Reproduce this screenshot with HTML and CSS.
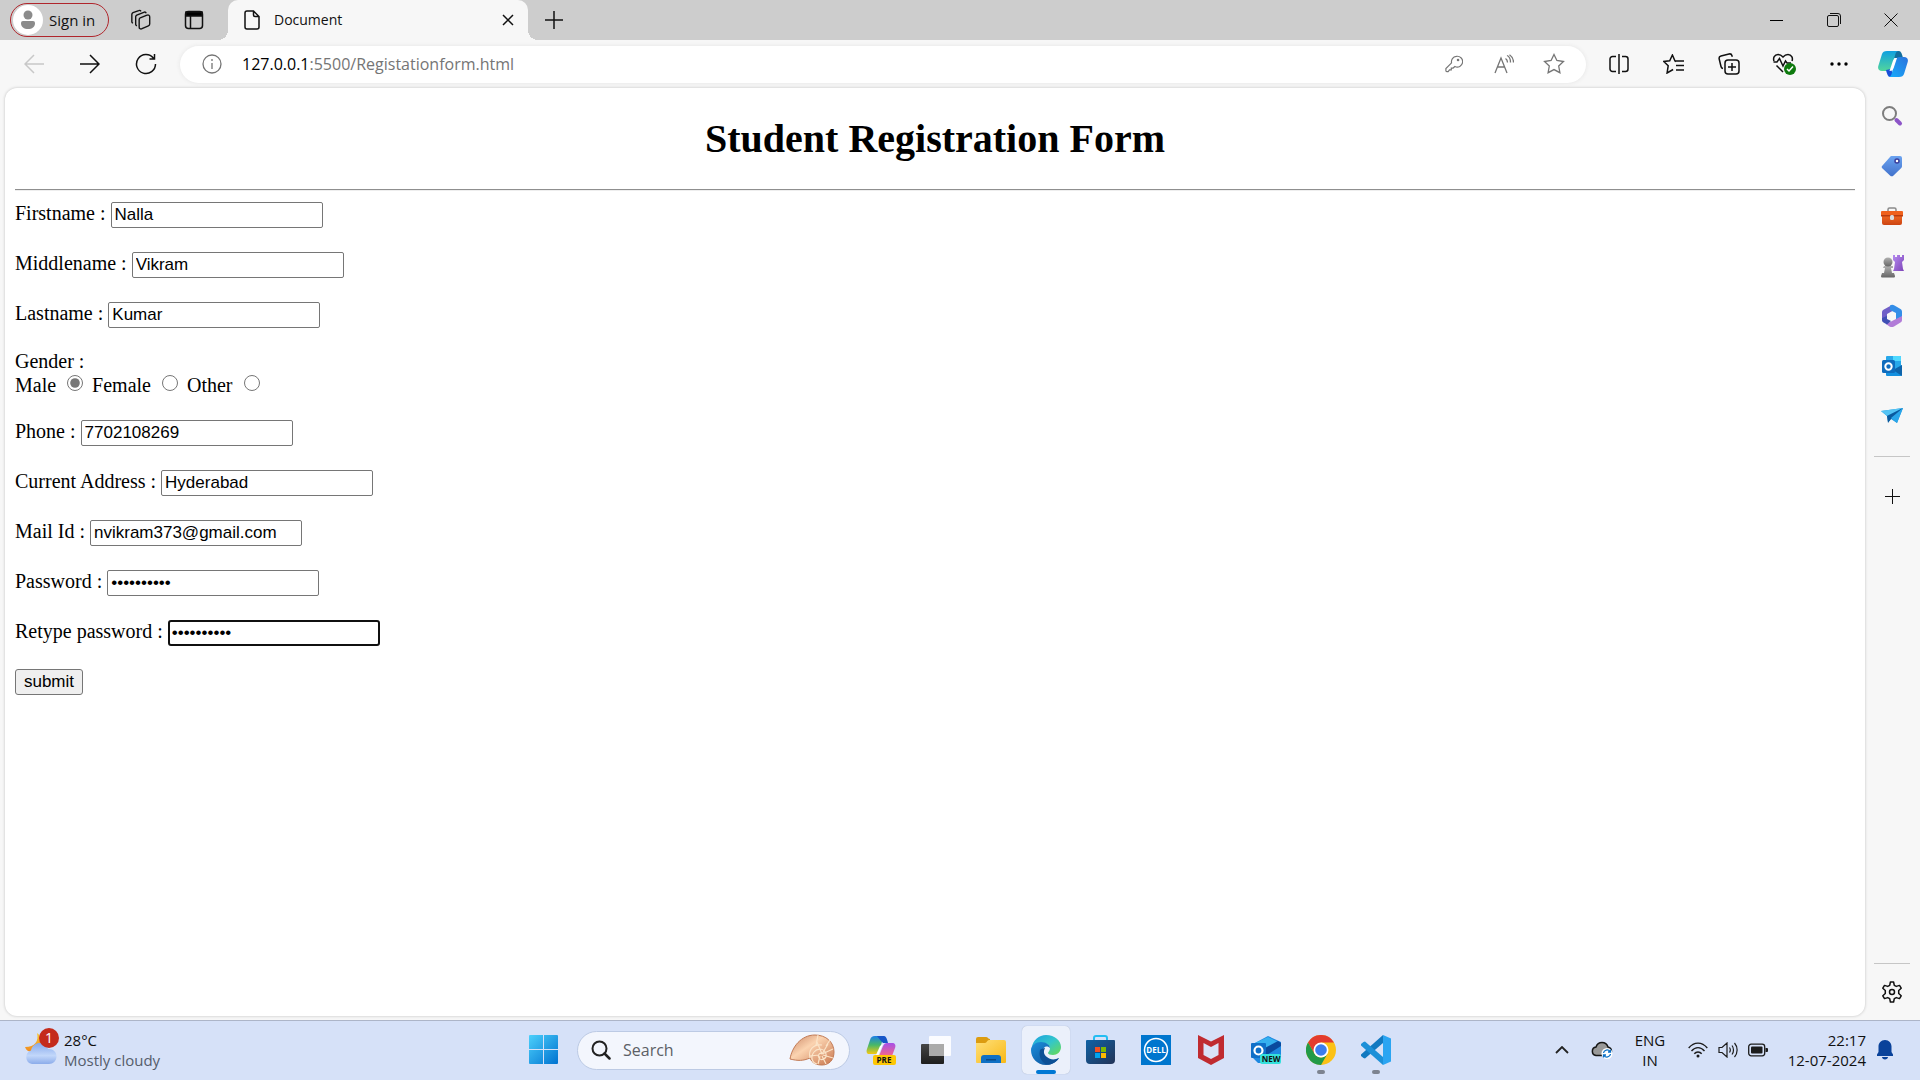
FILE: index.html
```html
<!DOCTYPE html>
<html lang="en">
<head>
<meta charset="utf-8">
<meta name="viewport" content="width=device-width, initial-scale=1">
<title>Document</title>
<link rel="stylesheet" href="styles.css">
</head>
<body>
<svg class="defs" aria-hidden="true">
  <defs>
    <linearGradient id="sky" x1="0" y1="0" x2="1" y2="1"><stop offset="0" stop-color="#4cd0fb"/><stop offset="1" stop-color="#0072d0"/></linearGradient>
    <linearGradient id="aqua" x1="0" y1="0" x2="0" y2="1"><stop offset="0" stop-color="#10a0e0"/><stop offset="1" stop-color="#52d69c"/></linearGradient>
    <linearGradient id="azure" x1="1" y1="0" x2="0" y2="1"><stop offset="0" stop-color="#2b72dc"/><stop offset="1" stop-color="#17aefc"/></linearGradient>
    <linearGradient id="rainbow" x1="0" y1="0" x2="0" y2="1"><stop offset="0" stop-color="#1b7fe8"/><stop offset=".5" stop-color="#48b868"/><stop offset="1" stop-color="#f6c912"/></linearGradient>
    <linearGradient id="pink" x1="0" y1="0" x2="0" y2="1"><stop offset="0" stop-color="#a650e8"/><stop offset="1" stop-color="#f5678b"/></linearGradient>
    <linearGradient id="violet" x1="0" y1="0" x2="1" y2="1"><stop offset="0" stop-color="#b58bf0"/><stop offset="1" stop-color="#7e45b8"/></linearGradient>
    <linearGradient id="gray" x1="0" y1="0" x2="0" y2="1"><stop offset="0" stop-color="#b0b0b0"/><stop offset="1" stop-color="#666"/></linearGradient>
    <linearGradient id="tagfill" x1="0" y1="0" x2="0" y2="1"><stop offset="0" stop-color="#6ba3f0"/><stop offset="1" stop-color="#4272cc"/></linearGradient>
    <linearGradient id="orange" x1="0" y1="0" x2="0" y2="1"><stop offset="0" stop-color="#f26a22"/><stop offset="1" stop-color="#cc4412"/></linearGradient>
    <linearGradient id="yellow" x1="0" y1="0" x2="1" y2="1"><stop offset="0" stop-color="#ffe07a"/><stop offset="1" stop-color="#f8b816"/></linearGradient>
    <linearGradient id="edgetop" x1="0" y1="0" x2="1" y2="1"><stop offset="0" stop-color="#1a9fe0"/><stop offset=".5" stop-color="#33c6cb"/><stop offset="1" stop-color="#6bdc4f"/></linearGradient>
    <linearGradient id="edgelow" x1="0" y1="0" x2="1" y2="1"><stop offset="0" stop-color="#1b8fdc"/><stop offset="1" stop-color="#0d4a92"/></linearGradient>
    <linearGradient id="navy" x1="0" y1="0" x2="1" y2="1"><stop offset="0" stop-color="#0f62a6"/><stop offset="1" stop-color="#233357"/></linearGradient>
    <linearGradient id="cloudfill" x1="0" y1="0" x2="0" y2="1"><stop offset="0" stop-color="#86a9ec"/><stop offset=".6" stop-color="#c2d7fa"/><stop offset="1" stop-color="#8cacea"/></linearGradient>
    <linearGradient id="moon" x1="0" y1="0" x2="0" y2="1"><stop offset="0" stop-color="#f9c832"/><stop offset="1" stop-color="#f08a20"/></linearGradient>
    <linearGradient id="shell" x1="0" y1="0" x2="1" y2="1"><stop offset="0" stop-color="#c98463"/><stop offset=".4" stop-color="#fbd3b0"/><stop offset="1" stop-color="#c8754c"/></linearGradient>
    <linearGradient id="dark" x1="0" y1="0" x2="0" y2="1"><stop offset="0" stop-color="#454545"/><stop offset="1" stop-color="#1e1e1e"/></linearGradient>
  </defs>
</svg>

<header class="tabstrip">
  <button class="profile"><span class="avatar"><svg width="16" height="20" viewBox="0 0 16 20" fill="#8b8b8b"><circle cx="8" cy="5" r="4.500"/><path d="M3 11h10a2 2 0 0 1 2 2c0 4-3 6-7 6s-7-2-7-6a2 2 0 0 1 2-2z"/></svg></span>Sign in</button>
  <button class="strip-btn" aria-label="Workspaces"><svg class="line" width="22" height="22" viewBox="0 0 24 24"><path d="M10.500 10l8-3.200a2 2 0 0 1 3 2v7.500c0 1-.5 1.700-1.400 2l-7 3.200a2 2 0 0 1-3.100-1.900v-7.600c0-1 .1-1.600.5-2M7.500 18.500C6.600 18 6.200 17.600 6.200 17V8.500c0-1 .5-1.500 1.200-1.900L15 3.600c1-.4 2.300 0 2.700 1M3.200 15.500c-.8-.4-1.200-1-1.200-1.700V6c0-1 .5-1.600 1.300-2L9.500 1.700c1-.4 2 0 2.500.8"/></svg></button>
  <button class="strip-btn" aria-label="Tab actions"><svg class="line" width="20" height="20" viewBox="0 0 20 20"><rect x="1.500" y="1.500" width="17" height="17" rx="3"/><path d="M6.500 6v12"/><path d="M2 2h16v4H2z" fill="#000"/></svg></button>
  <div class="tab">
    <svg class="line" width="16" height="20" viewBox="0 0 16 20"><path d="M3 1h6.500L15 6.500V17a2 2 0 0 1-2 2H3a2 2 0 0 1-2-2V3a2 2 0 0 1 2-2zM9.500 1v4a1.500 1.500 0 0 0 1.500 1.500h4"/></svg>
    <span class="tab-title">Document</span>
    <button class="tab-close" aria-label="Close tab"><svg class="line" width="12" height="12" viewBox="0 0 12 12"><path d="M1 1l10 10M11 1L1 11"/></svg></button>
  </div>
  <button class="new-tab" aria-label="New tab"><svg class="line" width="18" height="18" viewBox="0 0 18 18"><path d="M9 0v18M0 9h18"/></svg></button>
  <div class="window-controls">
    <button aria-label="Minimize"><svg width="13" height="13" viewBox="0 0 13 13"><path d="M0 6h13v1H0z"/></svg></button>
    <button aria-label="Restore"><svg class="line thin" width="14" height="14" viewBox="0 0 14 14"><rect x=".5" y="2.500" width="11" height="11" rx="1.500"/><path d="M3 .5h8a2.500 2.500 0 0 1 2.500 2.500v8"/></svg></button>
    <button aria-label="Close"><svg class="line thin" width="14" height="14" viewBox="0 0 14 14"><path d="M.5.5l13 13M13.500.5l-13 13"/></svg></button>
  </div>
</header>

<nav class="toolbar" aria-label="Browser">
  <div class="nav-buttons">
    <button aria-label="Back" disabled><svg class="line faint" width="20" height="20" viewBox="0 0 20 20"><path d="M20 10H1M10 1l-9 9 9 9"/></svg></button>
    <button aria-label="Forward"><svg class="line" width="20" height="20" viewBox="0 0 20 20"><path d="M0 10h19M10 1l9 9-9 9"/></svg></button>
    <button aria-label="Refresh"><svg class="line" width="22" height="22" viewBox="0 0 22 22"><path d="M20.500 11A9.500 9.500 0 1 1 18.500 5.200M19.500 1v5h-5"/></svg></button>
  </div>
  <div class="address">
    <svg class="line gray" width="20" height="20" viewBox="0 0 20 20"><circle cx="10" cy="10" r="9"/><path d="M10 9v6M10 5v2"/></svg>
    <div class="url" role="textbox" aria-label="Address"><span class="host">127.0.0.1</span>:5500/Registationform.html</div>
    <button aria-label="Passwords"><svg class="line gray" width="18" height="18" viewBox="0 0 20 20"><path d="M12.500 1.500a6 6 0 1 1-1.500 11.300L9 14.500H7v2H5l-1.500 2H2a1 1 0 0 1-1-1V15l6.300-6.200A6 6 0 0 1 12.500 1.500z"/><circle cx="14.500" cy="5.500" r=".8"/></svg></button>
    <button aria-label="Read aloud"><svg class="line gray" width="20" height="20" viewBox="0 0 20 20"><path d="M1 19L7 4l6 15M3.500 13h7M11.500 4.500c1.300.8 2 2 2 4M13 1.500c2.500 1 3.500 3.500 3.500 7M15.500.8c2.500 1.700 4 4.500 4 7.700"/></svg></button>
    <button aria-label="Favorite this page"><svg class="line gray" width="22" height="22" viewBox="0 0 22 22"><path d="M11 1.500l2.900 6 6.600 1-4.800 4.600 1.200 6.600-5.900-3.100-5.900 3.100 1.200-6.600L1.500 8.500l6.600-1z"/></svg></button>
  </div>
  <div class="tools">
    <button aria-label="Split screen"><svg class="line" width="20" height="20" viewBox="0 0 20 20"><path d="M7 2.500H3.500a2.500 2.500 0 0 0-2.500 2.500v10a2.500 2.500 0 0 0 2.500 2.500H7M10 0v20M13 2.500h3.500A2.500 2.500 0 0 1 19 5v10a2.500 2.500 0 0 1-2.500 2.500H13"/></svg></button>
    <button aria-label="Favorites"><svg class="line" width="22" height="20" viewBox="0 0 22 20"><path d="M13 7.500l-1-.5-2.600-6L6.700 6.700.8 7.500l4.400 4.200L4.100 19l6-3.500M13 7h8M13 11.500h8M13 16h8M12 7h2"/></svg></button>
    <button aria-label="Collections"><svg class="line" width="22" height="22" viewBox="0 0 22 22"><rect x="7" y="7" width="14" height="14" rx="3"/><path d="M14 10v8M10 14h8M5 15.500C3.800 15.300 3.200 14.600 3 13.500L1.200 6A2.500 2.500 0 0 1 3 3l8-2a2.500 2.500 0 0 1 3 1.700l.3 1"/></svg></button>
    <button aria-label="Browser essentials"><svg class="line" width="24" height="22" viewBox="0 0 24 22"><path d="M2 8C.8 5 2.500 1.500 6 1.500c2.200 0 3.500.8 5 2.500 1.500-1.700 2.800-2.500 5-2.500 3.500 0 5.200 3.500 4 6.500M1.500 9H5l2.500-3.500L11 13l2.500-5L15 10h4M4.500 12.500l6.500 6.500"/><circle cx="18" cy="16" r="6" fill="#0e7a0e" stroke="none"/><path d="M15 16l2 2 4-4.500" stroke="#fff"/></svg></button>
    <button aria-label="Settings and more"><svg width="18" height="4" viewBox="0 0 18 4"><circle cx="2" cy="2" r="1.700"/><circle cx="9" cy="2" r="1.700"/><circle cx="16" cy="2" r="1.700"/></svg></button>
  </div>
  <button class="copilot" aria-label="Copilot"><svg width="30" height="28" viewBox="0 0 30 28"><path d="M16 1h5c2 0 3 3 4 7h-9z" fill="#126e9e"/><path d="M9 1h12c-2 0-3 1-3.600 3L14 17c-1 3-2 4-5 4H4c-3 0-4.500-2-3.700-5L4 4c.8-2 2-3 5-3z" fill="url(#aqua)"/><path d="M8 20l5-1 3 8h-4c-2 0-3-3-4-7z" fill="#1850d8"/><path d="M21 27H10c2 0 3-1 3.600-3L17 11c1-3 2-4 5-4h4c3 0 4.500 2 3.700 5L26 24c-.8 2-2 3-5 3z" fill="url(#azure)"/><path d="M18 8h1l-3 9c-.7 2.500-1.500 3.500-4 4h-.5l3-9c.7-2.500 1.500-3.500 3.500-4z" fill="#fff"/></svg></button>
</nav>

<div class="workspace">
  <main class="page">
    <h1>Student Registration Form</h1>
    <hr>
    <form class="form">
      <div class="field"><label for="first">Firstname :</label><input id="first" type="text" value="Nalla"></div>
      <div class="field"><label for="middle">Middlename :</label><input id="middle" type="text" value="Vikram"></div>
      <div class="field"><label for="last">Lastname :</label><input id="last" type="text" value="Kumar"></div>
      <div class="gender" role="radiogroup" aria-labelledby="gender">
        <div id="gender">Gender :</div>
        <div class="options">
          <label for="male">Male</label><input id="male" type="radio" name="gender" checked>
          <label for="female">Female</label><input id="female" type="radio" name="gender">
          <label for="other">Other</label><input id="other" type="radio" name="gender">
        </div>
      </div>
      <div class="field"><label for="phone">Phone :</label><input id="phone" type="tel" value="7702108269"></div>
      <div class="field"><label for="addr">Current Address :</label><input id="addr" type="text" value="Hyderabad"></div>
      <div class="field"><label for="mail">Mail Id :</label><input id="mail" type="email" value="nvikram373@gmail.com"></div>
      <div class="field"><label for="pw">Password :</label><input id="pw" type="password" value="abcdefghij"></div>
      <div class="field"><label for="pw2">Retype password :</label><input id="pw2" class="active" type="password" value="abcdefghij"></div>
      <button class="submit" type="button">submit</button>
    </form>
  </main>
  <aside class="sidebar">
    <button aria-label="Search"><svg width="22" height="22" viewBox="0 0 22 22" fill="none"><circle cx="8.500" cy="8.500" r="6.500" stroke="#7d7d7d" stroke-width="2"/><path d="M15.500 15l3.500 3.500" stroke="#8d55c8" stroke-width="4" stroke-linecap="round"/></svg></button>
    <button aria-label="Shopping"><svg width="22" height="22" viewBox="0 0 22 22"><path d="M11 1h8a2 2 0 0 1 2 2v8c0 1-.3 1.500-1 2.200l-7.500 7.300a2.500 2.500 0 0 1-3.500 0l-7.500-7a2 2 0 0 1 0-3L9 2c.6-.7 1-1 2-1z" fill="url(#tagfill)"/><circle cx="16" cy="6" r="2" fill="#fff" stroke="#3a3f9c" stroke-width="1.500"/></svg></button>
    <button aria-label="Tools"><svg width="22" height="18" viewBox="0 0 22 18"><path d="M7 5V2.500A1.500 1.500 0 0 1 8.500 1h5A1.500 1.500 0 0 1 15 2.500V5" fill="none" stroke="#8a8a8a" stroke-width="1.500"/><path d="M1 8h20v8a2 2 0 0 1-2 2H3a2 2 0 0 1-2-2z" fill="url(#orange)"/><path d="M1 4h20a1 1 0 0 1 1 1v4H0V5a1 1 0 0 1 1-1z" fill="#f0611c"/><path d="M0 8h22v1.500H0z" fill="#b83c10"/><rect x="9" y="8" width="4" height="5" rx="1.500" fill="#d8dde0"/></svg></button>
    <button aria-label="Games"><svg width="24" height="24" viewBox="0 0 24 24"><path d="M13 1h2v2h2V1h3v2h2V1h2v5l-2 2 1 7 1 2H13l1-2 1-7-2-2z" fill="url(#violet)"/><g fill="url(#gray)"><path d="M4 12h9v2h-2l1 5h2l1 3c0 1-.5 1.500-1.500 1.500h-11c-1 0-1.500-.5-1.500-1.500l1-3h2l1-5H3z"/><circle cx="8" cy="8" r="4.500"/></g></svg></button>
    <button aria-label="Microsoft 365"><svg width="22" height="24" viewBox="0 0 22 24"><path d="M11 1L2 6a3 3 0 0 0-1 2v8l5 1V10l9-5z" fill="#6f5fc8"/><path d="M9 1.500c1.500-1 3-1 4.500 0l6 3.500c1 .7 1.500 1.500 1.500 3v8l-6-1V9l-6-3z" fill="#348ee8"/><path d="M21 12v4c0 1-.5 2-1.500 2.500L13 22.500c-1.500.8-3 .8-4.500 0L5 20l10-5z" fill="#b27cd8"/><path d="M1 14l5-2v3l4 2-4 3.500L2.500 18.500C1.500 18 1 17 1 16z" fill="#404fb4"/><circle cx="11" cy="12" r="3.600" fill="#f7f7f7"/></svg></button>
    <button aria-label="Outlook"><svg width="22" height="22" viewBox="0 0 22 22"><rect x="5" y="1" width="15" height="16" rx="1" fill="#28a8ea"/><path d="M12 1h7a1 1 0 0 1 1 1v4h-8z" fill="#50d9ff"/><path d="M5 11l8 4 8-5v10a1 1 0 0 1-1 1H6a1 1 0 0 1-1-1z" fill="#1490df"/><path d="M21 10v11l-9-6z" fill="#0f64aa"/><rect x="1" y="5" width="13" height="13" rx="1.500" fill="#0f6cbd"/><circle cx="7.500" cy="11.500" r="3.200" fill="none" stroke="#fff" stroke-width="2"/></svg></button>
    <button aria-label="Drop"><svg width="22" height="18" viewBox="0 0 22 18"><path d="M0 4l22-3-6 15-6-4-3 3-1-6z" fill="#1f96dc"/><path d="M0 4l22-3L6 9z" fill="#55c4f4"/><path d="M22 1L6 9l1 7 3-4z" fill="#0b5a9e"/><path d="M22 1L10 11l6 5z" fill="#2aa6ea"/></svg></button>
    <span class="divider"></span>
    <button aria-label="Customize"><svg class="line thin" width="15" height="15" viewBox="0 0 15 15"><path d="M7.500 0v15M0 7.500h15"/></svg></button>
    <span class="spacer"></span>
    <span class="divider low"></span>
    <button aria-label="Settings"><svg class="line" width="24" height="24" viewBox="0 0 24 24"><path d="M10.400 2h3.200l.7 3.300 2 1.100 3.200-1 1.700 2.800-2.500 2.300v3l2.500 2.300-1.700 2.800-3.200-1-2 1.100-.7 3.300h-3.200l-.7-3.300-2-1.100-3.200 1-1.700-2.800 2.500-2.300v-3L2.800 8.200l1.700-2.800 3.200 1 2-1.100z" stroke-linejoin="round"/><circle cx="12" cy="12" r="2.500"/></svg></button>
  </aside>
</div>

<footer class="taskbar">
  <button class="weather">
    <span class="weather-icon"><svg width="32" height="36" viewBox="0 0 32 36"><path d="M12 1c2 8-2 14-12 14 2 6 9 6 14 2s4-12-2-16z" fill="url(#moon)"/><path d="M7 32a7 7 0 0 1-1-13.500c1-5 5-7.500 9-7.500 4 0 7 2 8 6 5-.5 8.500 3 8.500 7.500S28 32 24 32z" fill="url(#cloudfill)"/></svg><span class="badge">1</span></span>
    <span class="weather-text"><span>28°C</span><span class="muted">Mostly cloudy</span></span>
  </button>
  <div class="apps">
    <button class="app" aria-label="Start"><svg width="30" height="30" viewBox="0 0 30 30" fill="url(#sky)"><path d="M1 0h13v14H0V1a1 1 0 0 1 1-1zM15 0h13a1 1 0 0 1 1 1v13H15zM0 15h14v14H1a1 1 0 0 1-1-1zM15 15h14v13a1 1 0 0 1-1 1H15z"/></svg></button>
    <div class="search">
      <svg width="20" height="20" viewBox="0 0 20 20" fill="none" stroke="#222" stroke-width="2"><circle cx="8.500" cy="8.500" r="7"/><path d="M13.500 13.500l5 5" stroke-linecap="round" stroke-width="2.500"/></svg>
      <input type="search" aria-label="Search" placeholder="Search">
      <svg width="46" height="32" viewBox="0 0 46 32"><path d="M1 25C3 13 12 1 26 1c11 0 19 7 19 17 0 8-5 13-12 13-6 0-10-2-12-7-7 3-12 3-20 1z" fill="url(#shell)" stroke="#c17a55"/><path d="M21 24c-2-8 3-14 12-13M33 20c-2-2-5 1-3 4s8 1 7-4-8-7-12-2-2 11 3 12M33 20L28 8M33 20l6-10M33 20l11-5M34 21l10 3M33 22l4 8M31 22l-2 8M30 21l-9 1M27 11l2-10M37 12l4-6" fill="none" stroke="#fbe4c8" stroke-width="1.200"/></svg>
    </div>
    <button class="app" aria-label="Copilot preview"><svg width="30" height="30" viewBox="0 0 30 30"><path d="M9 1h8c2 0 3 2 4 6h-5l-4 12H3c-2 0-3-2-2-5L4 5c1-3 2-4 5-4z" fill="url(#rainbow)"/><path d="M11 1h7c2 0 3 3 4 7h-5l-2-2z" fill="#1756c8"/><path d="M21 8h5c3 0 4 2 3 5l-3 8H13l4-10c1-2 2-3 4-3z" fill="url(#pink)"/><path d="M17 9l-5 12-2-1 4-9z" fill="#fff"/><rect x="7" y="20" width="23" height="10" rx="2" fill="#fdc705"/><text class="tag-text" x="18" y="28" text-anchor="middle">PRE</text></svg></button>
    <button class="app" aria-label="Task view"><svg width="30" height="30" viewBox="0 0 30 30"><rect x="0" y="9" width="23" height="20" rx="1" fill="url(#dark)"/><rect x="8" y="1" width="22" height="20" rx="1" fill="#fff" fill-opacity=".9"/><path d="M8 9h15v12H8z" fill="#aaa"/></svg></button>
    <button class="app" aria-label="File Explorer"><svg width="30" height="30" viewBox="0 0 30 30"><path d="M2 2h8c2 0 2 2 4 2v5H0V4a2 2 0 0 1 2-2z" fill="#dc9c10"/><path d="M13 5h15a2 2 0 0 1 2 2v20a1 1 0 0 1-1 1H1a1 1 0 0 1-1-1V8h9c2 0 2-3 4-3z" fill="url(#yellow)"/><path d="M5 28v-5a3 3 0 0 1 3-3h14a3 3 0 0 1 3 3v5z" fill="#0f70c4"/><rect x="10" y="24" width="10" height="1.500" fill="#0a4a88"/></svg></button>
    <button class="app current" aria-label="Microsoft Edge"><svg width="30" height="30" viewBox="0 0 30 30"><path d="M1 12C2 5 8 0 15 0c9 0 15 6 15 12 0 5-4 8-8 8-3 0-5-1-5-2s2-2 2-5c0-3-4-5-8-5-5 0-9 2-10 4z" fill="url(#edgetop)"/><path d="M0 15c0-5 5-8 10-8 5 0 9 3 9 6-1-1-3-2-5-1-4 2-4 8 0 11 4 4 10 3 14 0-3 4-7 7-13 7C6 30 0 23 0 15z" fill="url(#edgelow)"/><path d="M9 15c-2 8 3 14 8 14.800 5-.5 9-3.300 11-6.800-4 2-9 2-12-1-3-2-4-5-2-9-2 0-4 1-5 2z" fill="#0c5096"/></svg></button>
    <button class="app" aria-label="Microsoft Store"><svg width="30" height="30" viewBox="0 0 30 30"><path d="M8 6V3a2 2 0 0 1 2-2h9a2 2 0 0 1 2 2v3" fill="none" stroke="#24bdf2" stroke-width="2"/><path d="M1 5h27a1 1 0 0 1 1 1v19a4 4 0 0 1-4 4H4a4 4 0 0 1-4-4V6a1 1 0 0 1 1-1z" fill="url(#navy)"/><path d="M9 12h5v5H9z" fill="#f25022"/><path d="M15 12h5v5h-5z" fill="#7fba00"/><path d="M9 18h5v5H9z" fill="#00a4ef"/><path d="M15 18h5v5h-5z" fill="#ffb900"/></svg></button>
    <button class="app" aria-label="Dell"><svg width="30" height="30" viewBox="0 0 30 30"><path d="M0 0h30v30H0z" fill="#0076ce"/><circle cx="15" cy="15" r="11.500" fill="none" stroke="#fff" stroke-width="1.500"/><text class="dell-text" x="15" y="18" text-anchor="middle">DELL</text></svg></button>
    <button class="app" aria-label="McAfee"><svg width="28" height="30" viewBox="0 0 28 30"><path d="M1 0l13 6.500L27 0v23l-13 7-13-7z" fill="#c02b30"/><path d="M6.500 8l7.500 4 7.500-4v12L14 24l-7.500-4z" fill="#d9e2f7"/></svg></button>
    <button class="app" aria-label="Outlook"><svg width="30" height="30" viewBox="0 0 30 30"><path d="M2 9L17 1l13 6v15l-4 6H7l-5-5z" fill="#1e88e0"/><path d="M4 8l13-6 12 6-14 8z" fill="#35b0ef"/><path d="M10 15L27 6l3 2v3L14 21z" fill="#0a4a9e"/><rect x="0" y="8" width="15" height="15" rx="1" fill="#0f6fc8"/><circle cx="7.500" cy="15.500" r="4" fill="none" stroke="#fff" stroke-width="2.200"/><rect x="9" y="19" width="21" height="10" rx="2" fill="#35e0dc"/><text class="tag-text" x="20" y="27" text-anchor="middle">NEW</text></svg></button>
    <button class="app running" aria-label="Google Chrome"><svg width="30" height="30" viewBox="0 0 30 30"><circle cx="15" cy="15" r="15" fill="#fbc116"/><path d="M2 7.500A15 15 0 0 1 28 7.500H15L8.500 18.700z" fill="#e33b2e"/><path d="M2 7.500L8.500 18.700c1.500 2.500 4 3.800 6.500 3.800 2.200 0 5-1.200 6.500-3.800L15 30A15 15 0 0 1 2 7.500z" fill="#229a48"/><circle cx="15" cy="15" r="7.500" fill="#fff"/><circle cx="15" cy="15" r="5.800" fill="#3b7ded"/></svg></button>
    <button class="app running" aria-label="Visual Studio Code"><svg width="30" height="30" viewBox="0 0 30 30"><path d="M22 0v8L4 23.500 2.500 23 0 21v-1.500z" fill="#1279c0"/><path d="M22 30v-8L4 6.500 2.500 7 0 9v1.500z" fill="#1c90d8"/><path d="M22 0l8 3.500v23L22 30z" fill="#2ba5f2"/></svg></button>
  </div>
  <div class="tray">
    <button class="tray-btn" aria-label="Show hidden icons"><svg width="14" height="8" viewBox="0 0 14 8" fill="none" stroke="#222" stroke-width="1.800"><path d="M1 7l6-6 6 6"/></svg></button>
    <button class="tray-btn" aria-label="OneDrive"><svg width="22" height="18" viewBox="0 0 22 18"><path d="M5 14.500a4.300 4.300 0 0 1 0-8.500C6 3 8 1.500 11 1.500s5 1.500 6 4.500c2.500.5 3.500 2 3.500 4.500s-2 4-4 4z" fill="#999" stroke="#161616" stroke-width="1.500"/><circle cx="16" cy="12.500" r="5.500" fill="#fff"/><path d="M12.500 12a3.600 3.600 0 0 1 6.500-1.500M19.500 13a3.600 3.600 0 0 1-6.500 1.500M19.500 8.500v2.500H17M12.500 16.500V14H15" fill="none" stroke="#0a6fc6" stroke-width="1.300"/></svg></button>
    <button class="lang"><span>ENG</span><span>IN</span></button>
    <button class="status" aria-label="Network, volume, battery">
      <svg width="20" height="16" viewBox="0 0 20 16" fill="none" stroke="#1c1c1c" stroke-width="1.400"><path d="M.7 6C6-.5 14-.5 19.300 6M3.500 9c4-4.500 9-4.500 13 0M6.300 11.800c2-2.500 5.400-2.500 7.400 0"/><circle cx="10" cy="14" r="1.500" fill="#1c1c1c" stroke="none"/></svg>
      <svg width="20" height="16" viewBox="0 0 20 16" fill="none" stroke="#1c1c1c" stroke-width="1.200"><path d="M1 5.500h3L9 1v14l-5-4.500H1zM11.500 5.500c1 1.500 1 3.500 0 5M14 3.500c2 2.500 2 6.500 0 9M16.500 1c3.500 4 3.500 10 0 14"/></svg>
      <svg width="20" height="14" viewBox="0 0 20 14"><rect x=".7" y="1.200" width="16" height="11.600" rx="2.500" fill="none" stroke="#1c1c1c" stroke-width="1.300"/><rect x="3" y="3.500" width="11.500" height="7" rx="1" fill="#1c1c1c"/><path d="M17.500 5H19a1 1 0 0 1 1 1v2a1 1 0 0 1-1 1h-1.500z" fill="#1c1c1c"/></svg>
    </button>
    <button class="clock"><span>22:17</span><span>12-07-2024</span></button>
    <button class="bell" aria-label="Notifications"><svg width="16" height="20" viewBox="0 0 16 20" fill="#0a429a"><path d="M8 0c4 0 6.500 3 6.500 6.500V12l1.500 2.500V16H0v-1.500L1.500 12V6.500C1.500 3 4 0 8 0zM5 17h6c0 1.500-1.500 2.500-3 2.500S5 18.500 5 17z"/></svg></button>
  </div>
</footer>
</body>
</html>
```
FILE: styles.css
```css
* { box-sizing: border-box; }

body {
  margin: 0;
  min-height: 100vh;
  display: flex;
  flex-direction: column;
  background: #f7f7f7;
  color: #111;
  font: 14px/20px "Open Sans", "Noto Sans", sans-serif;
}

.defs { position: absolute; width: 0; height: 0; }

button {
  display: flex;
  align-items: center;
  justify-content: center;
  padding: 0;
  border: 0;
  background: none;
  color: inherit;
  font: inherit;
}

svg { flex: none; display: block; }
.line { fill: none; stroke: #111; stroke-width: 1.500; }
.thin { stroke-width: 1; }
.gray { stroke: #757575; stroke-width: 1.300; }
.faint { stroke: #c8c8c8; }

/* Tab strip */
.tabstrip {
  display: flex;
  align-items: center;
  height: 40px;
  padding-left: 10px;
  background: #cdcdcd;
}

.profile {
  height: 34px;
  width: 99px;
  justify-content: flex-start;
  gap: 6px;
  border: 1px solid #b0262c;
  border-radius: 17px;
  padding-left: 2px;
  font-size: 15px;
  white-space: nowrap;
}

.avatar {
  flex: none;
  display: flex;
  align-items: center;
  justify-content: center;
  width: 30px;
  height: 30px;
  border-radius: 50%;
  background: #fff;
}

.strip-btn { width: 53px; height: 40px; }
.profile + .strip-btn { margin-left: 5px; }

.tab {
  position: relative;
  display: flex;
  align-items: center;
  gap: 14px;
  width: 300px;
  height: 40px;
  margin-left: 8px;
  padding: 0 14px 0 16px;
  border-radius: 10px 10px 0 0;
  background: #f7f7f7;
}

.tab::before,
.tab::after {
  content: "";
  position: absolute;
  bottom: 0;
  width: 10px;
  height: 10px;
}

.tab::before { left: -10px; background: radial-gradient(circle at 0 0, #cdcdcd 10px, #f7f7f7 10px); }
.tab::after { right: -10px; background: radial-gradient(circle at 100% 0, #cdcdcd 10px, #f7f7f7 10px); }
.tab-title { flex: 1; }
.new-tab { width: 52px; height: 40px; }
.window-controls { display: flex; margin-left: auto; padding-right: 1px; }
.window-controls button { width: 57px; height: 40px; }

/* Toolbar */
.toolbar {
  display: flex;
  align-items: center;
  height: 48px;
  padding-left: 6px;
}

.nav-buttons, .tools { display: flex; }
.nav-buttons button { width: 56px; height: 40px; }
.tools button { width: 55px; height: 40px; }
.copilot { width: 54px; height: 40px; }

.address {
  flex: 1;
  display: flex;
  align-items: center;
  height: 37px;
  margin: 0 5px 0 6px;
  padding: 0 7px 0 22px;
  border-radius: 19px;
  background: #fff;
  box-shadow: 0 0 4px #e4e4e4;
}

.address button { width: 50px; height: 36px; }
.url { flex: 1; margin-left: 20px; color: #757575; font-size: 16px; }
.host { color: #000; }

/* Page */
.workspace { flex: 1; display: flex; }

.page {
  flex: 1;
  margin: 0 0 4px 5px;
  padding: 0 10px 24px;
  border-radius: 12px;
  background: #fff;
  box-shadow: 0 0 3px #bdbdbd;
  color: #000;
  font: 20px/24px "Liberation Serif", "Times New Roman", serif;
}

h1 { margin: 28px 0 27px; font-size: 40px; line-height: 46px; text-align: center; }
hr { margin: 0 0 10px; border: 0; border-top: 1px solid #8f8f8f; border-bottom: 1px solid #eee; }
.form { display: flex; flex-direction: column; align-items: flex-start; gap: 24px; }
.field { display: flex; align-items: baseline; gap: 5px; height: 26px; }

.field input {
  width: 212px;
  height: 26px;
  padding: 0 3px;
  border: 1px solid #767676;
  border-radius: 2px;
  background: #fff;
  color: #000;
  font: 17px/20px "Liberation Sans", Arial, sans-serif;
}

.field input.active { padding: 0 2px; border: 2px solid #101010; border-radius: 3px; }
.gender { margin: -2px 0; }
.options { display: flex; align-items: center; height: 24px; }
.options input { width: 16px; height: 16px; margin: 0 9px 4px 11px; accent-color: #767676; }

.submit {
  width: 68px;
  height: 26px;
  border: 1px solid #767676;
  border-radius: 3px;
  background: #efefef;
  font: 17px/20px "Liberation Sans", Arial, sans-serif;
}

/* Sidebar */
.sidebar {
  display: flex;
  flex-direction: column;
  align-items: center;
  width: 55px;
  padding: 3px 1px 3px 0;
}

.sidebar button { width: 50px; height: 50px; }
.divider { width: 36px; height: 1px; margin: 15px 0 14px; background: #c6c6c6; }
.divider.low { margin: 0 0 3px; }
.spacer { flex: 1; }

/* Taskbar */
.taskbar {
  display: grid;
  grid-template-columns: 1fr auto 1fr;
  align-items: center;
  height: 60px;
  padding-bottom: 1px;
  border-top: 1px solid #adb5c8;
  background: #d6e1f8;
  font-size: 15px;
}

.weather { justify-self: start; gap: 7px; padding-left: 25px; }
.weather-icon { position: relative; }

.badge {
  position: absolute;
  top: -4px;
  right: -2px;
  width: 20px;
  height: 20px;
  border-radius: 50%;
  background: #c42b1c;
  color: #fff;
  font-size: 14px;
  line-height: 20px;
}

.weather-text { display: flex; flex-direction: column; align-items: flex-start; }
.muted { color: #555d6b; }

.apps { display: flex; align-items: center; gap: 7px; }
.app { position: relative; width: 48px; height: 48px; border-radius: 5px; }
.current { background: #ebf0fb; box-shadow: 0 0 1px #9aa6bd; }

.current::after,
.running::after {
  content: "";
  position: absolute;
  bottom: 0;
  width: 8px;
  height: 4px;
  border-radius: 2px;
  background: #7d8390;
}

.current::after { width: 20px; background: #0078d4; }
.tag-text { font: 700 8px "Open Sans", sans-serif; fill: #111; }
.dell-text { font: 700 8px "Open Sans", sans-serif; fill: #fff; }

.search {
  display: flex;
  align-items: center;
  gap: 12px;
  width: 273px;
  height: 39px;
  margin-left: 2px;
  padding: 0 14px 0 13px;
  border: 1px solid #bccae4;
  border-radius: 20px;
  background: #f3f6fd;
}

.search input {
  flex: 1;
  min-width: 0;
  padding: 0;
  border: 0;
  background: none;
  font: 16px/20px "Open Sans", "Noto Sans", sans-serif;
}

.search input::placeholder { color: #5c5f66; }

.tray { justify-self: end; display: flex; align-items: center; padding-right: 27px; }
.tray-btn { width: 40px; height: 40px; }
.lang { flex-direction: column; width: 56px; }
.status { gap: 10px; width: 100px; }
.clock { flex-direction: column; align-items: flex-end; width: 88px; }
.bell { margin-left: 11px; }
```
